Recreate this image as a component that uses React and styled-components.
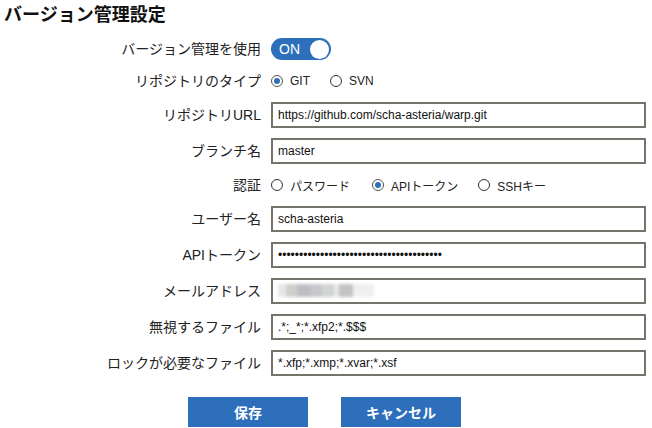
import React from 'react';
import styled, { createGlobalStyle } from 'styled-components';

const Global = createGlobalStyle`
  html, body { margin: 0; padding: 0; background: #fff; }
  body {
    font-family: "Liberation Sans", "Noto Sans CJK JP", sans-serif;
    color: #222;
  }
`;

const BLUE = '#2e6fbc';

const Page = styled.div`
  width: 652px;
  height: 428px;
  padding-top: 3px;
  box-sizing: border-box;
  overflow: hidden;
`;

const Title = styled.h1`
  margin: 0 0 11px 4px;
  font-size: 18px;
  line-height: 24px;
  font-weight: 700;
  color: #111;
`;

const Form = styled.div`
  display: grid;
  grid-template-columns: 261px 375px;
  column-gap: 10px;
  row-gap: 10px;
  align-items: center;
`;

const Label = styled.label`
  text-align: right;
  font-size: 14px;
  line-height: 20px;
  color: #222;
  white-space: nowrap;
`;

const Control = styled.div`
  position: relative;
  display: flex;
  align-items: center;
  min-height: 22px;
`;

const TextInput = styled.input`
  box-sizing: border-box;
  width: 375px;
  height: 26px;
  margin: 0;
  padding: 0 5px;
  border: 2px solid #75746a;
  border-radius: 0;
  background: #fff;
  font-family: "Liberation Sans", "Noto Sans CJK JP", sans-serif;
  font-size: 12px;
  color: #111;
  outline: none;
`;

const Blur = styled.span`
  position: absolute;
  left: 7px;
  top: 6px;
  width: 96px;
  height: 13px;
  background: linear-gradient(
    90deg,
    #e4e4e4 0 8%,
    #c9cbc4 8% 20%,
    #b8b8bc 20% 34%,
    #c5c0c8 34% 46%,
    #cdd0d0 46% 58%,
    #e6e6e6 58% 64%,
    #bdbdbd 64% 78%,
    #eeeeee 78% 100%
  );
  filter: blur(1.5px);
  opacity: 0.9;
`;

const Toggle = styled.div`
  width: 60px;
  height: 22px;
  border-radius: 11px;
  background: ${BLUE};
  display: flex;
  align-items: center;
  justify-content: space-between;
  padding: 0 2px 0 8px;
  box-sizing: border-box;
  color: #fff;
  font-size: 14px;
`;

const Knob = styled.span`
  width: 19px;
  height: 19px;
  border-radius: 50%;
  background: #fff;
`;

const Option = styled.span`
  display: inline-flex;
  align-items: center;
  gap: 7px;
  margin-right: ${p => p.$gap}px;
  font-size: 12px;
  color: #222;
  white-space: nowrap;
`;

const Radio = styled.span`
  width: 12px;
  height: 12px;
  box-sizing: border-box;
  border-radius: 50%;
  border: 1px solid ${p => (p.$checked ? '#555' : '#333')};
  display: inline-flex;
  align-items: center;
  justify-content: center;
  &::after {
    content: '';
    width: 6px;
    height: 6px;
    border-radius: 50%;
    background: ${p => (p.$checked ? BLUE : 'transparent')};
  }
`;

const Buttons = styled.div`
  display: flex;
  justify-content: center;
  gap: 33px;
  margin-top: 21px;
  padding-right: 3px;
`;

const Button = styled.button`
  width: 120px;
  height: 30px;
  border: none;
  border-radius: 0;
  background: ${BLUE};
  color: #fff;
  font-family: "Liberation Sans", "Noto Sans CJK JP", sans-serif;
  font-size: 14px;
  font-weight: 700;
  cursor: pointer;
`;

const RadioOpt = ({ checked, gap = 20, children }) => (
  <Option $gap={gap}>
    <Radio $checked={checked} />
    {children}
  </Option>
);

export default function App() {
  return (
    <Page>
      <Global />
      <Title>バージョン管理設定</Title>
      <Form>
        <Label>バージョン管理を使用</Label>
        <Control>
          <Toggle>
            ON
            <Knob />
          </Toggle>
        </Control>

        <Label>リポジトリのタイプ</Label>
        <Control>
          <RadioOpt checked>GIT</RadioOpt>
          <RadioOpt>SVN</RadioOpt>
        </Control>

        <Label>リポジトリURL</Label>
        <Control>
          <TextInput readOnly value="https://github.com/scha-asteria/warp.git" />
        </Control>

        <Label>ブランチ名</Label>
        <Control>
          <TextInput readOnly value="master" />
        </Control>

        <Label>認証</Label>
        <Control>
          <RadioOpt gap={22}>パスワード</RadioOpt>
          <RadioOpt checked gap={20}>APIトークン</RadioOpt>
          <RadioOpt>SSHキー</RadioOpt>
        </Control>

        <Label>ユーザー名</Label>
        <Control>
          <TextInput readOnly value="scha-asteria" />
        </Control>

        <Label>APIトークン</Label>
        <Control>
          <TextInput type="password" readOnly value="abcdefghijabcdefghijabcdefghijabcdefghi" />
        </Control>

        <Label>メールアドレス</Label>
        <Control>
          <TextInput readOnly value="" />
          <Blur />
        </Control>

        <Label>無視するファイル</Label>
        <Control>
          <TextInput readOnly value=".*;_*;*.xfp2;*.$$$" />
        </Control>

        <Label>ロックが必要なファイル</Label>
        <Control>
          <TextInput readOnly value="*.xfp;*.xmp;*.xvar;*.xsf" />
        </Control>
      </Form>
      <Buttons>
        <Button>保存</Button>
        <Button>キャンセル</Button>
      </Buttons>
    </Page>
  );
}
